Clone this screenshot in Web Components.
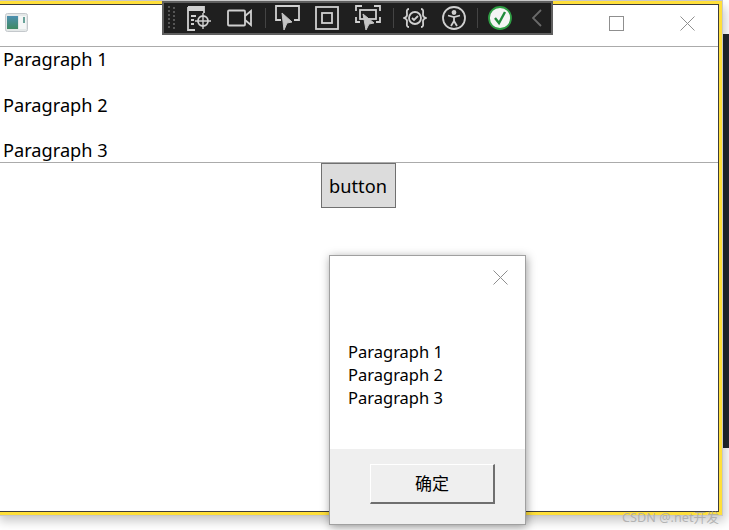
<!DOCTYPE html>
<html>
<head>
<meta charset="utf-8">
<style>
  html, body { margin: 0; height: 100%; background: #fff; overflow: hidden; }
  body { font-family: "Noto Sans", "Noto Sans CJK SC", sans-serif; color: #000; }
</style>
</head>
<body>
<desk-strip></desk-strip>
<app-window>
  <para-list></para-list>
  <push-button>button</push-button>
</app-window>
<debug-toolbar></debug-toolbar>
<message-dialog>
  <div>Paragraph 1</div>
  <div>Paragraph 2</div>
  <div>Paragraph 3</div>
</message-dialog>
<water-mark>CSDN @.net开发</water-mark>

<script>
// dark window peeking out behind the app on the right
class DeskStrip extends HTMLElement {
  constructor() {
    super();
    this.attachShadow({ mode: 'open' }).innerHTML = `
      <style>
        :host { position: absolute; left: 715px; top: 34px; width: 14px; height: 414px; background: #20262c; }
      </style>`;
  }
}

class AppWindow extends HTMLElement {
  constructor() {
    super();
    this.attachShadow({ mode: 'open' }).innerHTML = `
      <style>
        :host {
          position: absolute; left: -4px; top: 1px; width: 726px; height: 514px;
          box-sizing: border-box; display: flex; flex-direction: column;
          background: #fff; border: 3px solid #ffdf3a; outline: 1px solid #c8c8c8;
          box-shadow: 3px 6px 10px rgba(0,0,0,.22);
        }
        .inner { flex: 1; display: flex; flex-direction: column; border: 1px solid #3c3c3c; min-height: 0; }
        .title { height: 41px; flex: none; display: flex; align-items: flex-start; border-bottom: 1px solid #ababab; position: relative; }
        .icon { margin-left: 5px; margin-top: 8px; }
        .max { position: absolute; left: 609px; top: 11px; width: 13px; height: 13px; border: 1px solid #8f8f8f; }
        .close { position: absolute; left: 680px; top: 11px; }
        .body { flex: 1; display: flex; flex-direction: column; align-items: center; min-height: 0; }
      </style>
      <div class="inner">
        <div class="title">
          <svg class="icon" width="23" height="19" viewBox="0 0 23 19">
            <defs><linearGradient id="g" x1="0" y1="0" x2="0" y2="1">
              <stop offset="0" stop-color="#4c8fb0"/><stop offset="1" stop-color="#3f8a62"/>
            </linearGradient></defs>
            <rect x=".5" y=".5" width="22" height="18" rx="2" fill="#e4e8e8" stroke="#c4c8cc"/>
            <rect x="2" y="3" width="11" height="13" fill="url(#g)"/>
            <rect x="14" y="3" width="7" height="13" fill="#f4f6f6"/>
            <rect x="18" y="4" width="2" height="6" fill="#6aa39a"/>
          </svg>
          <div class="max"></div>
          <svg class="close" width="15" height="15" viewBox="0 0 15 15"><path d="M.5.5l14 14M14.500.5l-14 14" stroke="#8f8f8f" fill="none"/></svg>
        </div>
        <div class="body"><slot></slot></div>
      </div>`;
  }
}

class ParaList extends HTMLElement {
  constructor() {
    super();
    this.attachShadow({ mode: 'open' }).innerHTML = `
      <style>
        :host { display: block; align-self: stretch; height: 115px; overflow: hidden; border-bottom: 1px solid #ababab; flex: none; font-size: 18.2px; }
        p { margin: 0 0 21px 3px; line-height: 24.500px; }
      </style>
      <p>Paragraph 1</p><p>Paragraph 2</p><p>Paragraph 3</p>`;
  }
}

class PushButton extends HTMLElement {
  constructor() {
    super();
    this.attachShadow({ mode: 'open' }).innerHTML = `
      <style>
        :host {
          display: flex; align-items: center; justify-content: center; flex: none;
          width: 75px; height: 45px; box-sizing: border-box; margin: 0 2px 0 0;
          background: #dcdcdc; border: 1px solid #707070; font-size: 18.2px;
        }
      </style><slot></slot>`;
  }
}

class DebugToolbar extends HTMLElement {
  constructor() {
    super();
    this.attachShadow({ mode: 'open' }).innerHTML = `
      <style>
        :host {
          position: absolute; left: 162px; top: 1px; width: 391px; height: 34px; box-sizing: border-box;
          background: #1f1f1f; border: 2px solid #5f5f5f;
          display: flex; align-items: center;
        }
        svg { display: block; flex: none; fill: none; stroke: #d0d0d0; stroke-width: 1.800; }
        .sep { width: 1px; height: 20px; background: #444; flex: none; }
      </style>
      <svg style="margin-left:3px;stroke:#555;stroke-dasharray:2 2;stroke-width:2" width="10" height="26" viewBox="0 0 10 26"><path d="M2 1v24M7 2v24"/></svg>
      <svg style="margin-left:10px" width="26" height="28" viewBox="0 0 26 28">
        <path d="M1 3h16v6M1 3v23h7" /><path d="M1 5h16" stroke-width="4"/><path d="M4 12h5M4 16h3M4 20h3"/>
        <circle cx="16" cy="17" r="5"/><path d="M16 9v16M8 17h16" stroke-width="1.400"/>
      </svg>
      <svg style="margin-left:14px" width="25" height="18" viewBox="0 0 25 18">
        <rect x="1" y="1.500" width="17" height="15" rx="1"/><path d="M18 7l6-5v14l-6-5"/>
      </svg>
      <div class="sep" style="margin-left:13px"></div>
      <svg style="margin:2px 0 0 9px" width="26" height="28" viewBox="0 0 26 28">
        <path d="M6 15H1V1h23v14h-5"/><path d="M7 8l10 9-5 1-3 7z" fill="#c4c4c4" stroke="#c4c4c4" stroke-width="1"/>
      </svg>
      <svg style="margin-left:14px" width="24" height="24" viewBox="0 0 24 24">
        <rect x="1" y="1" width="22" height="22"/><rect x="7" y="7" width="10" height="10"/>
      </svg>
      <svg style="margin:2px 0 0 16px" width="26" height="28" viewBox="0 0 26 28">
        <path d="M1 6V1h6M19 1h6v5M25 12v5h-4M1 12v5h4"/><rect x="5" y="5" width="16" height="9"/><path d="M8 9l11 9-5 1-3 6z" fill="#c4c4c4" stroke="#c4c4c4" stroke-width="1"/>
      </svg>
      <div class="sep" style="margin-left:12px"></div>
      <svg style="margin-left:9px" width="24" height="22" viewBox="0 0 24 22">
        <path d="M6 2C3 2 4 5 4 8c0 2-3 3-3 3s3 1 3 3c0 3-1 6 2 6M18 2c3 0 2 3 2 6 0 2 3 3 3 3s-3 1-3 3c0 3 1 6-2 6"/>
        <circle cx="12" cy="11" r="6"/><path d="M9 11l2 2 4-4"/>
      </svg>
      <svg style="margin-left:15px" width="24" height="24" viewBox="0 0 24 24">
        <circle cx="12" cy="12" r="11"/><circle cx="12" cy="6.500" r="1.500" fill="#d0d0d0"/><path d="M6 9.500l6 1.500 6-1.500M12 11v4l-3 5M12 15l3 5"/>
      </svg>
      <div class="sep" style="margin-left:11px"></div>
      <svg style="margin-left:10px" width="24" height="24" viewBox="0 0 24 24">
        <circle cx="12" cy="12" r="11" fill="#f4f4f4" stroke="#2f9e44" stroke-width="1.800"/><path d="M7 12l4 5 6-11" stroke="#1f8a3a" stroke-width="2.400"/>
      </svg>
      <svg style="margin-left:20px;stroke:#6a6a6a" width="10" height="18" viewBox="0 0 10 18"><path d="M9 1L1 9l8 8"/></svg>`;
  }
}

class MessageDialog extends HTMLElement {
  constructor() {
    super();
    this.attachShadow({ mode: 'open' }).innerHTML = `
      <style>
        :host {
          position: absolute; left: 329px; top: 255px; width: 197px; height: 270px; box-sizing: border-box;
          display: flex; flex-direction: column; background: #fff; border: 1px solid #a0a0a0;
          box-shadow: 1px 2px 9px rgba(0,0,0,.38);
        }
        .top { height: 43px; flex: none; display: flex; justify-content: flex-end; align-items: flex-start; }
        .top svg { margin: 14px 17px 0 0; }
        .msg { flex: 1; padding: 41px 0 0 18px; font-size: 16.5px; line-height: 23px; }
        .foot { height: 75px; flex: none; background: #efefef; display: flex; justify-content: center; padding: 15px 0 0 10px; box-sizing: border-box; }
        .ok {
          width: 125px; height: 40px; box-sizing: border-box; display: flex; align-items: center; justify-content: center;
          background: #efefef; font-size: 17px; padding-bottom: 3px;
          border: 1px solid; border-color: #fff #6f6f6f #6f6f6f #fff; border-width: 1px 2px 2px 1px;
        }
      </style>
      <div class="top"><svg width="15" height="15" viewBox="0 0 15 15"><path d="M.5.5l14 14M14.500.5l-14 14" stroke="#8f8f8f" fill="none"/></svg></div>
      <div class="msg"><slot></slot></div>
      <div class="foot"><div class="ok">确定</div></div>`;
  }
}

class WaterMark extends HTMLElement {
  constructor() {
    super();
    this.attachShadow({ mode: 'open' }).innerHTML = `
      <style>
        :host { position: absolute; left: 622px; top: 509px; font-size: 12.700px; line-height: 16px; color: rgba(170,170,170,.85); white-space: nowrap; }
      </style><slot></slot>`;
  }
}

customElements.define('desk-strip', DeskStrip);
customElements.define('app-window', AppWindow);
customElements.define('para-list', ParaList);
customElements.define('push-button', PushButton);
customElements.define('debug-toolbar', DebugToolbar);
customElements.define('message-dialog', MessageDialog);
customElements.define('water-mark', WaterMark);
</script>
</body>
</html>
